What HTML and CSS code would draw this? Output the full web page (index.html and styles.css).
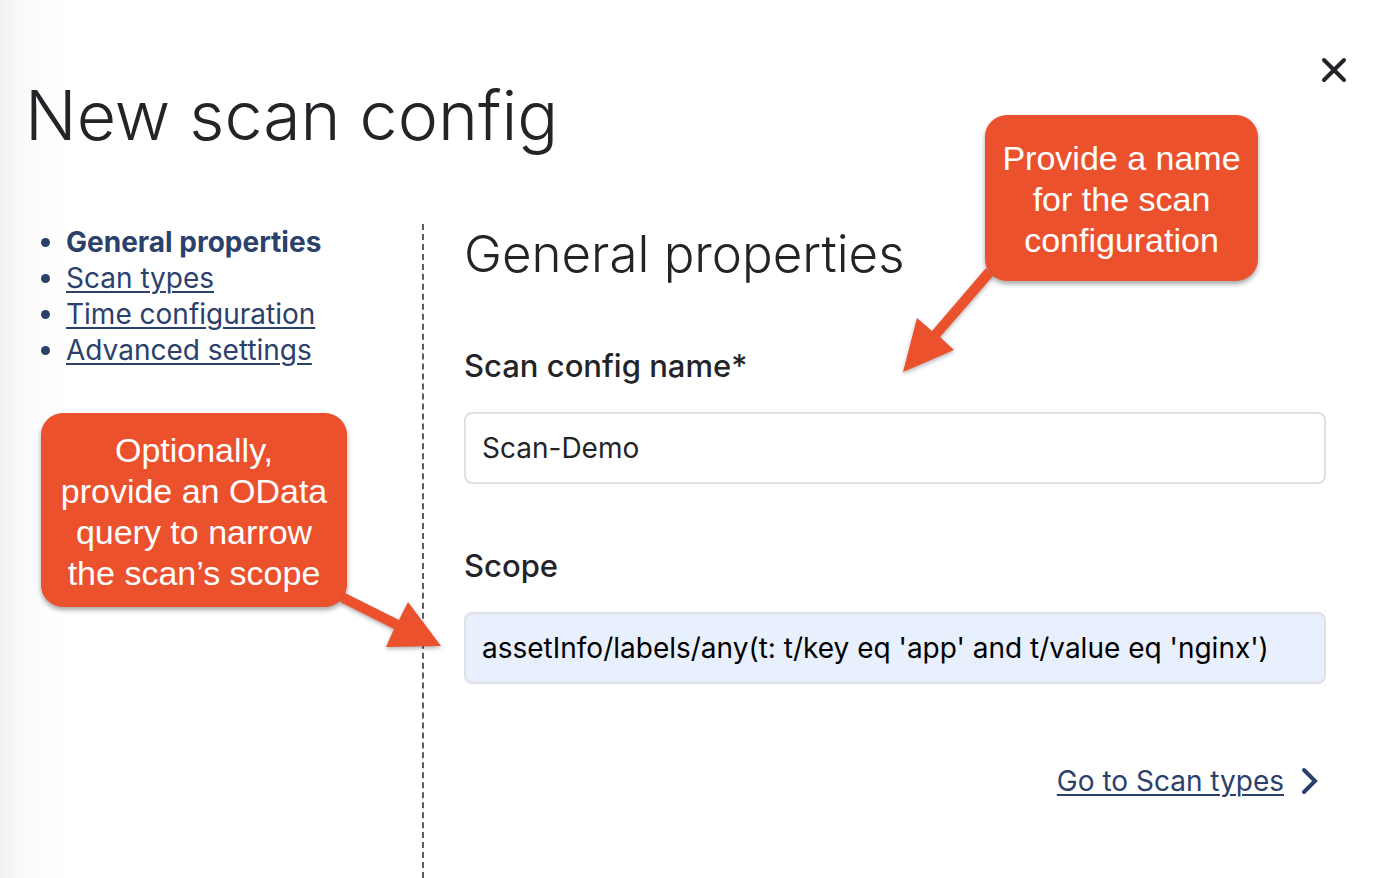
FILE: index.html
```html
<!DOCTYPE html>
<html lang="en">
<head>
<meta charset="utf-8">
<title>New scan config</title>
<link rel="stylesheet" href="styles.css">
</head>
<body>
<div class="dialog">
  <header class="dialog-header">
    <h1 class="dialog-title">New scan config</h1>
    <button class="close" type="button" aria-label="Close">
      <svg width="28" height="28" viewBox="0 0 28 28" aria-hidden="true"><path d="M4 4L24 24M24 4L4 24"/></svg>
    </button>
  </header>
  <div class="dialog-body">
    <nav class="steps">
      <ul class="step-list">
        <li class="step step-current">General properties</li>
        <li class="step"><a href="#types">Scan types</a></li>
        <li class="step"><a href="#time">Time configuration</a></li>
        <li class="step"><a href="#advanced">Advanced settings</a></li>
      </ul>
    </nav>
    <main class="panel">
      <h2 class="panel-title">General properties</h2>
      <div class="field">
        <label class="field-label" for="name">Scan config name*</label>
        <input class="field-input" id="name" type="text" value="Scan-Demo">
      </div>
      <div class="field">
        <label class="field-label" for="scope">Scope</label>
        <input class="field-input field-filled" id="scope" type="text" value="assetInfo/labels/any(t: t/key eq 'app' and t/value eq 'nginx')">
      </div>
      <div class="panel-footer">
        <a class="next" href="#types">Go to Scan types</a>
        <svg class="chevron" width="20" height="28" viewBox="0 0 20 28" aria-hidden="true"><path d="M4 3L15 14L4 25"/></svg>
      </div>
    </main>
  </div>
  <aside class="callout callout-name">
    <svg class="arrow arrow-name" width="100" height="112" viewBox="0 0 100 112" aria-hidden="true"><path d="M86 4L32 67L17 54L3 108L54 86L40 73L93 12Z"/></svg>
    <p class="callout-text">Provide a name<br>for the scan<br>configuration</p>
  </aside>
  <aside class="callout callout-scope">
    <svg class="arrow arrow-scope" width="120" height="64" viewBox="0 0 120 64" aria-hidden="true"><path d="M22 6L76 33L85 15L118 59L63 60L71 42L17 15Z"/></svg>
    <p class="callout-text">Optionally,<br>provide an OData<br>query to narrow<br>the scan’s scope</p>
  </aside>
</div>
</body>
</html>
```
FILE: styles.css
```css
* {
  box-sizing: border-box;
}

body {
  margin: 0;
  color: #232428;
  background: #fff;
  font-family: Inter, "Liberation Sans", sans-serif;
  font-size: 28px;
  line-height: 36px;
}

.dialog {
  position: relative;
  display: flex;
  flex-direction: column;
  min-height: 100vh;
  background: linear-gradient(to right, #f1f1f4, #f8f8fa 18px, #fdfdfe 40px, #fff 76px);
}

.dialog-header {
  display: flex;
  justify-content: space-between;
  align-items: flex-start;
  padding: 50px 40px 0 25px;
}

.dialog-title {
  margin: 22px 0 0;
  font-size: 68px;
  font-weight: 300;
  line-height: 86px;
}

.close {
  display: flex;
  padding: 6px;
  border: 0;
  background: none;
  color: inherit;
}

.close svg,
.chevron {
  fill: none;
  stroke: currentColor;
  stroke-width: 4;
  stroke-linecap: round;
}

.dialog-body {
  display: flex;
  flex: 1;
  margin-top: 66px;
}

.steps {
  flex: 0 0 424px;
  border-right: 2px dashed #5b5d66;
  color: #2b416b;
}

.step-list {
  margin: 0;
  padding: 0 0 0 66px;
}

a {
  color: #2b416b;
  text-decoration-thickness: 2px;
  text-underline-offset: 3px;
}

.step-current {
  font-weight: 700;
}

.panel {
  flex: 1;
  min-width: 0;
  padding: 0 68px 0 40px;
}

.panel-title {
  margin: 0;
  font-size: 51px;
  font-weight: 300;
  line-height: 60px;
}

.field {
  display: flex;
  flex-direction: column;
  gap: 26px;
  margin-top: 62px;
}

.field-label {
  font-size: 31px;
  font-weight: 500;
  line-height: 40px;
}

.field-input {
  width: 100%;
  height: 72px;
  padding: 0 16px;
  border: 2px solid #e0e0e6;
  border-radius: 8px;
  background: #fff;
  color: inherit;
  font: inherit;
}

.field-filled {
  background: #e8effd;
  color: #000;
}

.panel-footer {
  display: flex;
  justify-content: flex-end;
  align-items: center;
  gap: 16px;
  margin-top: 79px;
  padding-right: 6px;
  color: #2b416b;
}

.callout {
  position: absolute;
  border-radius: 22px;
  background: #ec512d;
  box-shadow: 0 3px 5px rgba(0, 0, 0, 0.35);
  color: #fff;
  font-family: "Liberation Sans", Arial, sans-serif;
  font-size: 34px;
  line-height: 41px;
  text-align: center;
}

.callout-name {
  top: 115px;
  right: 136px;
  width: 273px;
  padding: 23px 0 20px;
}

.callout-scope {
  top: 413px;
  left: 41px;
  width: 306px;
  padding: 17px 0 13px;
}

.callout-text {
  margin: 0;
}

.arrow {
  position: absolute;
  fill: #ec512d;
  filter: drop-shadow(0 2px 2px rgba(0, 0, 0, 0.3));
}

.arrow-name {
  top: 149px;
  left: -85px;
}

.arrow-scope {
  top: 174px;
  left: 282px;
}
```
